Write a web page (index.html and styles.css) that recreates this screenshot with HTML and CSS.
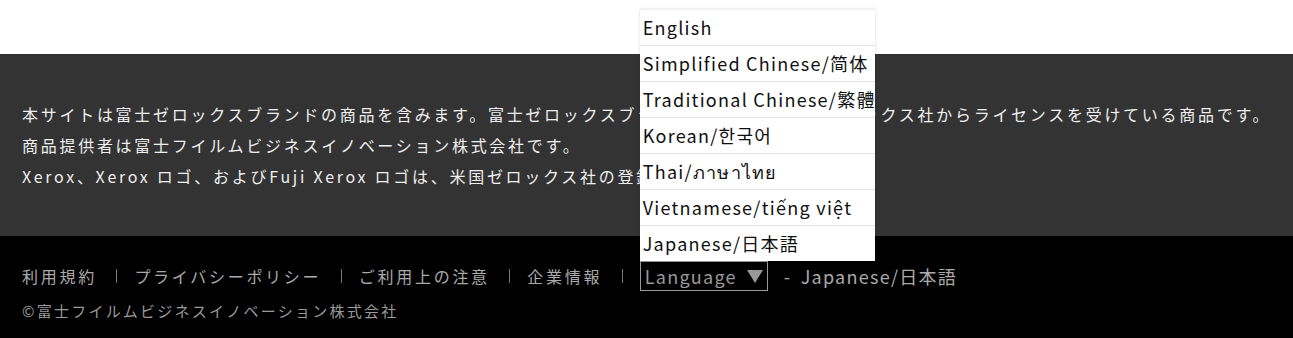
FILE: index.html
```html
<!DOCTYPE html>
<html lang="ja">
<head>
    <meta charset="UTF-8">
    <meta name="viewport" content="width=device-width, initial-scale=1.0">
    <title>Footer</title>
    <link rel="stylesheet" href="styles.css">
</head>
<body>
    <div class="topspace"></div>
    <div class="notice">
        <p>本サイトは富士ゼロックスブランドの商品を含みます。富士ゼロックスブランドの商品は、米国ゼロックス社からライセンスを受けている商品です。<br>
        商品提供者は富士フイルムビジネスイノベーション株式会社です。<br>
        Xerox、Xerox ロゴ、およびFuji Xerox ロゴは、米国ゼロックス社の登録商標または商標です。</p>
    </div>
    <footer class="footer">
        <div class="links">
            <a href="#">利用規約</a>
            <span class="sep"></span>
            <a href="#">プライバシーポリシー</a>
            <span class="sep"></span>
            <a href="#">ご利用上の注意</a>
            <span class="sep"></span>
            <a href="#">企業情報</a>
            <span class="sep"></span>
            <div class="langwrap">
                <ul class="langmenu">
                    <li>English</li>
                    <li>Simplified Chinese/简体</li>
                    <li>Traditional Chinese/繁體</li>
                    <li>Korean/한국어</li>
                    <li>Thai/ภาษาไทย</li>
                    <li>Vietnamese/tiếng việt</li>
                    <li>Japanese/日本語</li>
                </ul>
                <div class="langbtn"><span>Language</span><span class="arrow"></span></div>
            </div>
            <span class="dash">-</span>
            <span class="current">Japanese/日本語</span>
        </div>
        <div class="copyright">©富士フイルムビジネスイノベーション株式会社</div>
    </footer>
</body>
</html>
```

FILE: styles.css
```css
html, body {
    margin: 0;
    padding: 0;
}
body {
    font-family: "Noto Sans CJK JP", "Noto Sans", sans-serif;
    font-size: 16px;
    letter-spacing: 0.17em;
    background-color: #fff;
    overflow: hidden;
}
.topspace {
    height: 54px;
    background-color: #fff;
}
.notice {
    background-color: #333;
    color: #eee;
    padding: 45px 8px 44px 22px;
}
.notice p {
    margin: 0;
    line-height: 31px;
}
.footer {
    background-color: #000;
    color: #aaa;
    padding: 25px 22px 18px;
    height: 59px;
}
.links {
    display: flex;
    align-items: center;
    height: 30px;
}
.links a {
    color: #aaa;
    text-decoration: none;
}
.sep {
    width: 1px;
    height: 14px;
    background-color: #777;
    margin: 0 17px 0 19.5px;
}
.langwrap {
    position: relative;
    font-size: 18px;
    letter-spacing: 0.07em;
}
.langbtn {
    display: flex;
    align-items: center;
    justify-content: space-between;
    box-sizing: border-box;
    height: 30px;
    width: 128px;
    border: 1px solid #999;
    padding: 0 4px 0 4px;
    color: #999;
}
.arrow {
    width: 0;
    height: 0;
    border-left: 8px solid transparent;
    border-right: 8px solid transparent;
    border-top: 13px solid #999;
}
.langmenu {
    position: absolute;
    left: 0;
    bottom: 100%;
    width: 235px;
    margin: 0;
    padding: 0;
    list-style: none;
    background-color: #fff;
    box-shadow: 0 0 3px rgba(0, 0, 0, 0.15);
}
.langmenu li {
    height: 35px;
    line-height: 35px;
    padding-left: 3px;
    color: #111;
    border-top: 1px solid #e4e4e4;
    white-space: nowrap;
}
.langmenu li:first-child {
    border-top: 1px solid #f2f2f2;
}
.dash {
    margin-left: 16px;
    font-size: 18px;
}
.current {
    margin-left: 8px;
    font-size: 18px;
    letter-spacing: 0.07em;
    color: #aaa;
}
.copyright {
    font-size: 15px;
    letter-spacing: 0.15em;
    margin-top: 8px;
    line-height: 24px;
    color: #999;
}
```
